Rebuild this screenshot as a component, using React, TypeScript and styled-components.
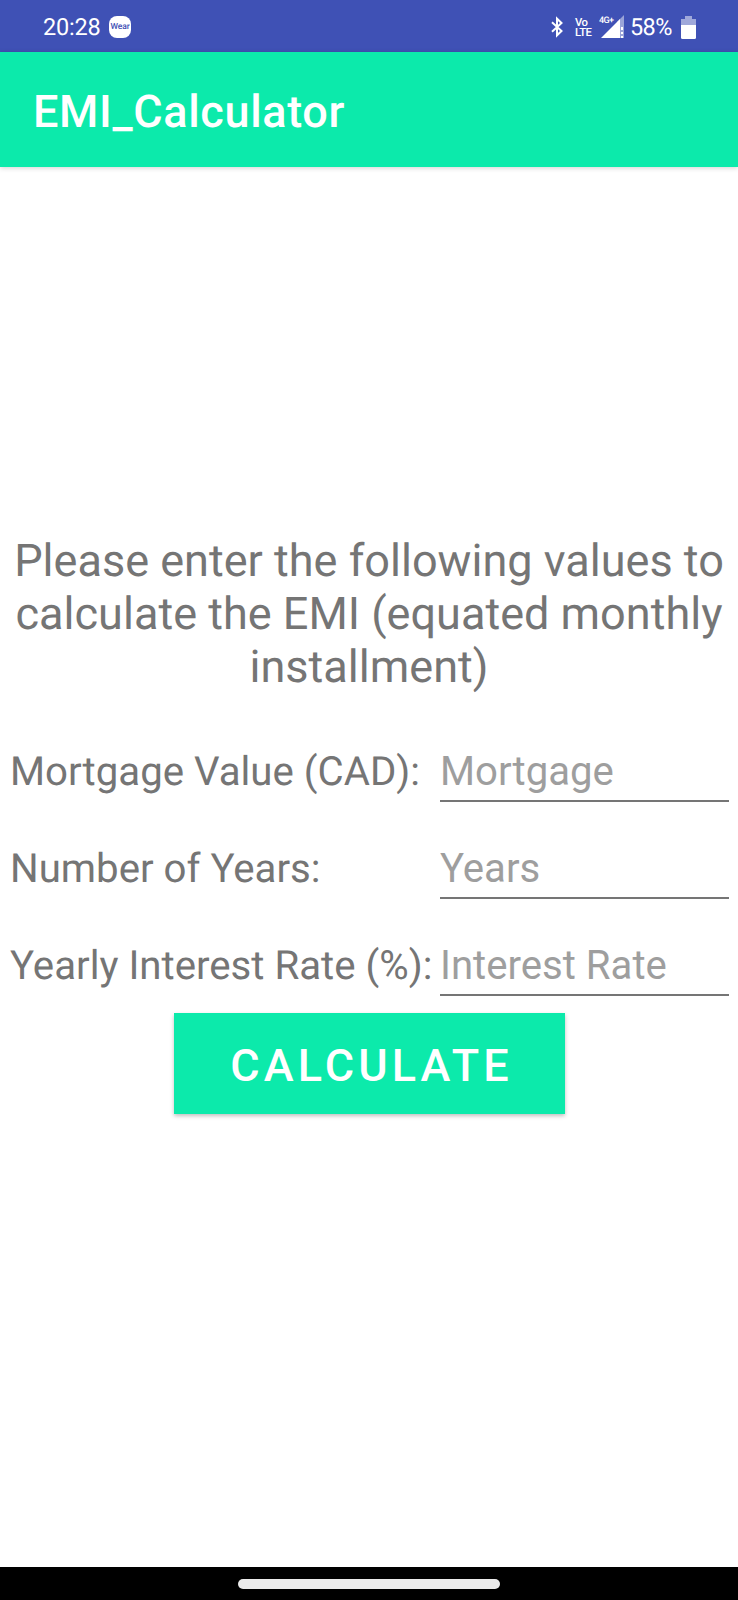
import React from "react";
import styled, { createGlobalStyle } from "styled-components";

const GlobalStyle = createGlobalStyle`
  * { box-sizing: border-box; }
  body {
    margin: 0;
    background: #fff;
    font-family: Roboto, "Liberation Sans", sans-serif;
    text-rendering: geometricPrecision;
  }
`;

const Screen = styled.div`
  width: 738px;
  height: 1600px;
  display: flex;
  flex-direction: column;
  overflow: hidden;
  background: #fff;
`;

const StatusBar = styled.header`
  height: 52px;
  flex: none;
  display: flex;
  align-items: center;
  justify-content: space-between;
  padding: 2px 42px 0 43px;
  background: #3f51b5;
  color: #fff;
`;

const StatusGroup = styled.div`
  display: flex;
  align-items: center;
`;

const StatusText = styled.span<{ $width: number; $gap?: number; $tight?: boolean }>`
  width: ${(p) => p.$width}px;
  margin-left: ${(p) => p.$gap ?? 0}px;
  font-size: 23.5px;
  line-height: 28px;
  letter-spacing: ${(p) => (p.$tight ? -0.6 : -0.2)}px;
  white-space: nowrap;
`;

const WearBadge = styled.span`
  width: 22px;
  height: 22px;
  margin-left: 8px;
  border-radius: 8px;
  display: flex;
  align-items: center;
  justify-content: center;
  background: #fff;
  color: #3f51b5;
  font-size: 8.5px;
  font-weight: 500;
  letter-spacing: -0.1px;
`;

const VoLte = styled.span`
  display: flex;
  flex-direction: column;
  align-items: flex-start;
  width: 17px;
  margin-left: 12px;
  padding-top: 1px;
  font-size: 11.3px;
  line-height: 10px;
  font-weight: 500;
  letter-spacing: -0.5px;
`;

const StatusIcon = styled.svg<{ $gap?: number }>`
  display: block;
  flex: none;
  margin-left: ${(p) => p.$gap ?? 0}px;
`;

const AppBar = styled.div`
  height: 115px;
  flex: none;
  display: flex;
  align-items: center;
  padding: 3px 32px 0 33px;
  background: #0ceaab;
  box-shadow: 0 1px 5px rgba(0, 0, 0, 0.18);
`;

const Title = styled.h1`
  margin: 0;
  font-size: 45px;
  line-height: 53px;
  font-weight: 500;
  letter-spacing: 0.65px;
  color: #fff;
`;

const Content = styled.main`
  flex: 1;
  display: flex;
  flex-direction: column;
  align-items: center;
  padding-top: 368px;
`;

const Message = styled.p`
  width: 738px;
  margin: 0 0 43.5px;
  font-size: 45.05px;
  line-height: 52.85px;
  text-align: center;
  color: #757575;
`;

const Form = styled.form`
  width: 100%;
  display: flex;
  flex-direction: column;
  align-items: center;
`;

const Row = styled.div`
  width: 100%;
  height: 97px;
  display: grid;
  grid-template-columns: 430px 289px;
  align-items: start;
  padding-left: 10px;
`;

const Label = styled.label`
  height: 65px;
  padding-top: 11px;
  font-size: 40.2px;
  line-height: 48px;
  color: #757575;
  white-space: nowrap;
`;

const Field = styled.input`
  width: 289px;
  height: 65px;
  padding: 10px 0 5px;
  border: 0;
  border-bottom: 2px solid #757575;
  border-radius: 0;
  outline: 0;
  background: transparent;
  font: 40.15px / 48px Roboto, sans-serif;
  color: #212121;
  &::placeholder {
    color: #9e9e9e;
    opacity: 1;
  }
`;

const CalculateButton = styled.button`
  width: 391px;
  height: 101px;
  margin-top: -15px;
  padding: 4px 0 0 5px;
  border: 0;
  background: #0ceaab;
  box-shadow: 0 2px 4px rgba(0, 0, 0, 0.25);
  font: 500 45px / 53px Roboto, sans-serif;
  letter-spacing: 4.1px;
  color: #fff;
`;

const NavBar = styled.footer`
  height: 33px;
  flex: none;
  display: flex;
  justify-content: center;
  padding-top: 12px;
  background: #000;
`;

const HomeHandle = styled.div`
  width: 262px;
  height: 10px;
  border-radius: 5px;
  background: #ebebeb;
`;

const fields = [
  { id: "mortgage", label: "Mortgage Value (CAD):", hint: "Mortgage" },
  { id: "years", label: "Number of Years:", hint: "Years" },
  { id: "rate", label: "Yearly Interest Rate (%):", hint: "Interest Rate" },
];

export default function App() {
  return (
    <>
      <GlobalStyle />
      <Screen>
        <StatusBar>
          <StatusGroup>
            <StatusText $width={58}>20:28</StatusText>
            <WearBadge>Wear</WearBadge>
          </StatusGroup>
          <StatusGroup>
            <StatusIcon width="12" height="22" viewBox="0 0 12 22" fill="none" stroke="#fff" strokeWidth="2">
              <path d="M1 6.2 L10.5 15 L6 19.3 V2.7 L10.5 7 L1 15.8" />
            </StatusIcon>
            <VoLte>
              <span>Vo</span>
              <span>LTE</span>
            </VoLte>
            <StatusIcon $gap={7} width="25" height="24" viewBox="0 0 25 24">
              <path d="M18 7 L25 0 V11 H18Z" fill="#9aa4d8" />
              <path d="M2 23 L21 4 V23Z" fill="#fff" />
              <path d="M21 11H25V23H21Z" fill="#9aa4d8" />
              <path d="M22 12h2v3h-2zM22 17h2v2h-2zM22 21h2v2h-2z" fill="#fff" />
              <text x="0" y="8" fontSize="9" fontWeight="500" fill="#fff" textLength="15">
                4G+
              </text>
            </StatusIcon>
            <StatusText $width={51} $gap={6} $tight>
              58%
            </StatusText>
            <StatusIcon width="15" height="23" viewBox="0 0 15 23">
              <path d="M0 3H4V0H11V3H15V9H0Z" fill="#9fa8da" />
              <path d="M0 9H15V21.5Q15 23 13.5 23H1.5Q0 23 0 21.5Z" fill="#fff" />
            </StatusIcon>
          </StatusGroup>
        </StatusBar>
        <AppBar>
          <Title>EMI_Calculator</Title>
        </AppBar>
        <Content>
          <Message>
            Please enter the following values to
            <br />
            calculate the EMI (equated monthly
            <br />
            installment)
          </Message>
          <Form onSubmit={(e) => e.preventDefault()}>
            {fields.map((f) => (
              <Row key={f.id}>
                <Label htmlFor={f.id}>{f.label}</Label>
                <Field id={f.id} placeholder={f.hint} />
              </Row>
            ))}
            <CalculateButton type="submit">CALCULATE</CalculateButton>
          </Form>
        </Content>
        <NavBar>
          <HomeHandle />
        </NavBar>
      </Screen>
    </>
  );
}
